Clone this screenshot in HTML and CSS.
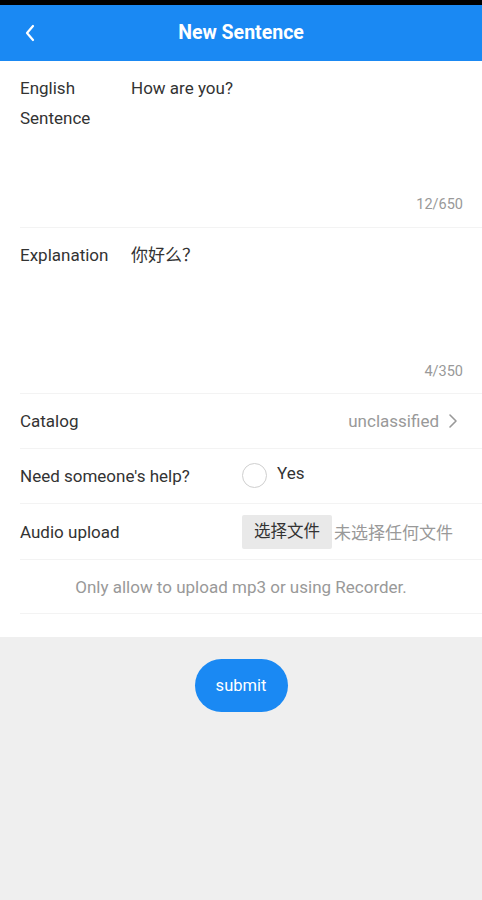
FILE: index.html
```html
<!DOCTYPE html>
<html lang="en">

<head>
    <meta charset="UTF-8">
    <meta name="viewport" content="width=device-width, initial-scale=1.0">
    <title>New Sentence</title>
    <link rel="stylesheet" href="styles.css">
</head>

<body>
    <div class="status-bar"></div>
    <div class="header">
        <span class="back">
            <svg width="12" height="18" viewBox="0 0 12 18"><path d="M9 2 L3 9 L9 16" fill="none" stroke="#fff" stroke-width="2.2" stroke-linecap="round" stroke-linejoin="round"/></svg>
        </span>
        <h1>New Sentence</h1>
    </div>
    <div class="form">
        <div class="field">
            <div class="field-top">
                <div class="label">English Sentence</div>
                <div class="value">How are you?</div>
            </div>
            <div class="count">12/650</div>
        </div>
        <div class="field field-second">
            <div class="field-top">
                <div class="label">Explanation</div>
                <div class="value">你好么？</div>
            </div>
            <div class="count">4/350</div>
        </div>
        <div class="row row-catalog">
            <div class="row-label">Catalog</div>
            <div class="catalog-value">
                unclassified
                <svg width="10" height="16" viewBox="0 0 10 16"><path d="M2 2 L8 8 L2 14" fill="none" stroke="#999" stroke-width="1.6" stroke-linecap="round" stroke-linejoin="round"/></svg>
            </div>
        </div>
        <div class="row row-help">
            <div class="row-label wide">Need someone's help?</div>
            <span class="radio"></span>
            <span class="radio-text">Yes</span>
        </div>
        <div class="row row-audio">
            <div class="row-label wide">Audio upload</div>
            <span class="file-btn">选择文件</span>
            <span class="file-name">未选择任何文件</span>
        </div>
        <div class="row row-hint">Only allow to upload mp3 or using Recorder.</div>
    </div>
    <div class="actions">
        <button class="submit">submit</button>
    </div>
</body>

</html>
```

FILE: styles.css
```css
* {
    margin: 0;
    padding: 0;
    box-sizing: border-box;
}

body {
    background: #efefef;
    font-family: Roboto, "Noto Sans CJK SC", sans-serif;
    color: #333;
    font-size: 17px;
}

.status-bar {
    height: 5px;
    background: #000;
}

.header {
    height: 56px;
    background: #1a89f3;
    display: flex;
    align-items: center;
    justify-content: center;
    position: relative;
}

.header h1 {
    color: #fff;
    font-size: 19.5px;
    font-weight: bold;
    margin-top: -1px;
}

.back {
    position: absolute;
    left: 24px;
    top: 19px;
    line-height: 0;
}

.form {
    background: #fff;
    padding-bottom: 23px;
}

.field {
    margin-left: 20px;
    padding: 12px 19px 12px 0;
    border-bottom: 1px solid #f3f3f3;
}

.field-second {
    padding-bottom: 11px;
}

.field-top {
    display: flex;
    height: 122px;
    line-height: 30px;
}

.label {
    width: 111px;
}

.value {
    flex: 1;
}

.count {
    text-align: right;
    font-size: 14.5px;
    line-height: 20px;
    color: #999;
}

.row {
    margin-left: 20px;
    display: flex;
    align-items: center;
    border-bottom: 1px solid #f3f3f3;
}

.row-label.wide {
    width: 222px;
}

.row-catalog {
    height: 55px;
    justify-content: space-between;
    padding-right: 24px;
}

.catalog-value {
    color: #999;
    display: flex;
    align-items: center;
    gap: 9px;
}

.row-help {
    height: 55px;
}

.radio {
    width: 25px;
    height: 25px;
    border: 1.5px solid #cfcfcf;
    border-radius: 50%;
    margin-top: -2px;
}

.radio-text {
    margin-left: 10px;
    margin-top: -6px;
}

.row-audio {
    height: 56px;
}

.file-btn {
    display: inline-block;
    width: 90px;
    height: 34px;
    line-height: 34px;
    text-align: center;
    background: #e9e9e9;
    border-radius: 2px;
    font-size: 16.5px;
}

.file-name {
    margin-left: 2px;
    color: #999;
}

.row-hint {
    height: 54px;
    margin-left: 20px;
    justify-content: center;
    color: #999;
    padding-right: 20px;
}

.actions {
    display: flex;
    justify-content: center;
    padding-top: 22px;
}

.submit {
    width: 93px;
    height: 53px;
    border: none;
    border-radius: 27px;
    background: #1a89f3;
    color: #fff;
    font-family: Roboto, sans-serif;
    font-size: 16.5px;
}
```
